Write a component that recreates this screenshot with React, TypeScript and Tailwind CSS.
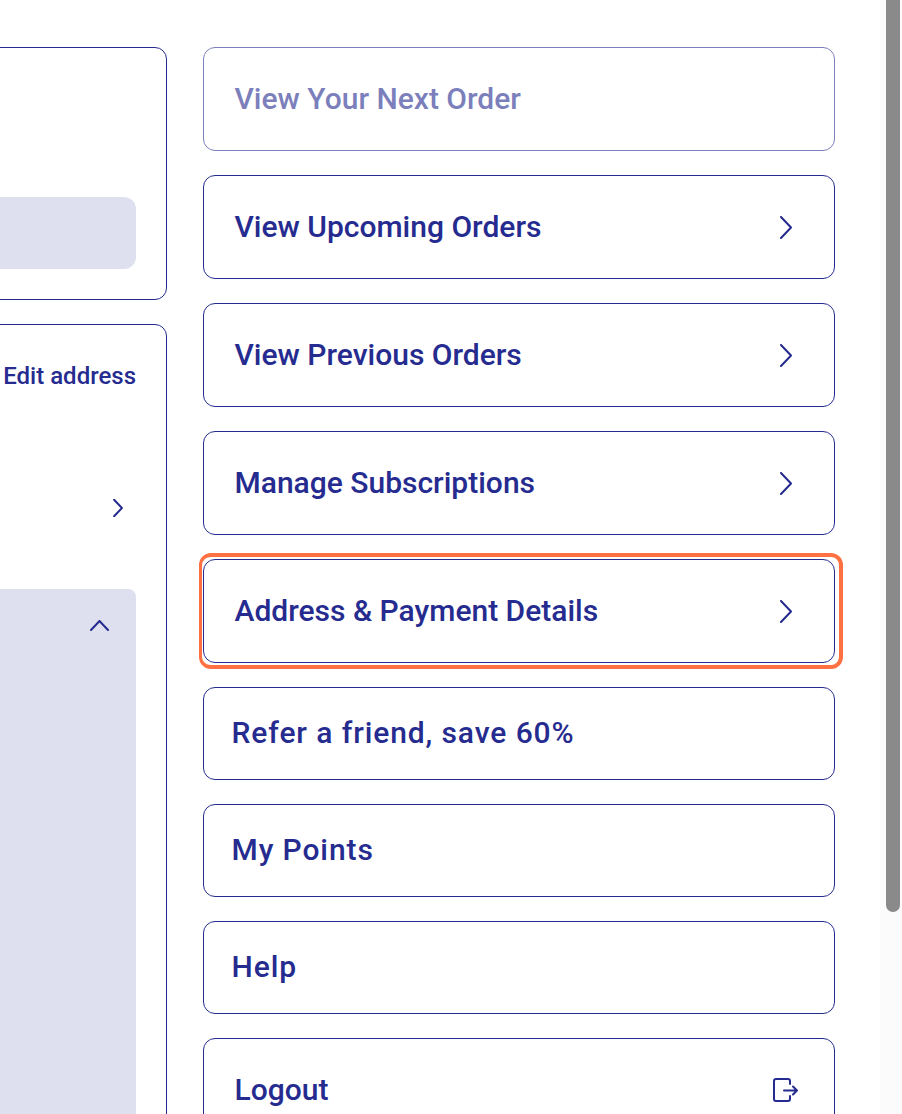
const navy = '#252b8f';

function ChevronRight({ className, weight = 2 }: { className: string; weight?: number }) {
  return (
    <svg className={className} viewBox="0 0 12 23" fill="none" stroke={navy} strokeWidth={weight} strokeLinecap="round" strokeLinejoin="round">
      <path d="M1 1l10 10.5L1 22" />
    </svg>
  );
}

function LogoutIcon() {
  return (
    <svg className="h-[24px] w-[25px]" viewBox="0 0 25 24" fill="none" stroke={navy} strokeWidth={2} strokeLinecap="round" strokeLinejoin="round">
      <path d="M17 6V3a2 2 0 0 0-2-2H3a2 2 0 0 0-2 2v18a2 2 0 0 0 2 2h12a2 2 0 0 0 2-2v-3" />
      <path d="M11 12.500h13M20 8.500l4 4-4 4" />
    </svg>
  );
}

interface MenuRowProps {
  label: string;
  disabled?: boolean;
  focused?: boolean;
}

function MenuRow({ label, disabled, focused }: MenuRowProps) {
  return (
    <div className="relative shrink-0">
      {focused && (
        <div className="absolute -top-[6px] -right-[8px] -bottom-[6px] -left-[4px] rounded-[12px] border-4 border-l-[3px] border-[#ff7043]" />
      )}
      <div
        className={`flex h-[104px] items-center justify-between rounded-xl border border-[#252b8f] bg-white pr-[42px] pl-[30.5px] ${disabled ? 'opacity-60' : ''}`}
      >
        <span className="mb-[2px] text-[30px] font-medium text-[#252b8f]">{label}</span>
        {!disabled && <ChevronRight className="h-[23px] w-[12px]" />}
      </div>
    </div>
  );
}

function LinkRow({ label }: { label: string }) {
  return (
    <div className="flex h-[93px] shrink-0 items-center rounded-xl border border-[#252b8f] bg-white pl-[27.5px]">
      <span className="mb-[2px] text-[30px] font-medium tracking-[0.9px] text-[#252b8f]">{label}</span>
    </div>
  );
}

export default function App() {
  return (
    <div className="flex h-[1114px] w-[902px] overflow-hidden bg-white font-['Roboto',sans-serif]">
      <div className="flex w-[880px] shrink-0 gap-[36px] pt-[47px]">
        <div className="-ml-[40px] flex w-[207px] shrink-0 flex-col gap-[24px]">
          <div className="flex h-[253px] shrink-0 flex-col justify-end rounded-xl border border-[#252b8f] pr-[30px] pb-[30px]">
            <div className="h-[72px] rounded-xl bg-[#dee0ef]" />
          </div>
          <div className="h-[900px] shrink-0 rounded-xl border border-[#252b8f] pr-[30px]">
            <div className="flex justify-end pt-[32px]">
              <span className="text-[24px] font-medium leading-[38px] text-[#252b8f]">Edit address</span>
            </div>
            <div className="flex justify-end pt-[104px] pr-[13px]">
              <ChevronRight className="h-[18px] w-[10px]" weight={2.5} />
            </div>
            <div className="mt-[72px] flex h-[600px] justify-end rounded-lg bg-[#dee0ef] pt-[31px] pr-[27px]">
              <svg className="h-[11px] w-[19px]" viewBox="0 0 19 11" fill="none" stroke={navy} strokeWidth={2} strokeLinecap="round" strokeLinejoin="round">
                <path d="M1 10l8.500-9L18 10" />
              </svg>
            </div>
          </div>
        </div>

        <div className="flex w-[632px] shrink-0 flex-col gap-[24px]">
          <MenuRow label="View Your Next Order" disabled />
          <MenuRow label="View Upcoming Orders" />
          <MenuRow label="View Previous Orders" />
          <MenuRow label="Manage Subscriptions" />
          <MenuRow label="Address & Payment Details" focused />
          <LinkRow label="Refer a friend, save 60%" />
          <LinkRow label="My Points" />
          <LinkRow label="Help" />
          <div className="flex h-[104px] shrink-0 items-center justify-between rounded-xl border border-[#252b8f] pr-[36px] pl-[30.5px]">
            <span className="mb-[2px] text-[30px] font-medium text-[#252b8f]">Logout</span>
            <LogoutIcon />
          </div>
        </div>
      </div>

      <div className="h-full w-[22px] shrink-0 bg-[#fbfbfb] pl-[6px]">
        <div className="h-[912px] w-[14px] rounded-b-[7px] bg-[#8a8a8a]" />
      </div>
    </div>
  );
}
